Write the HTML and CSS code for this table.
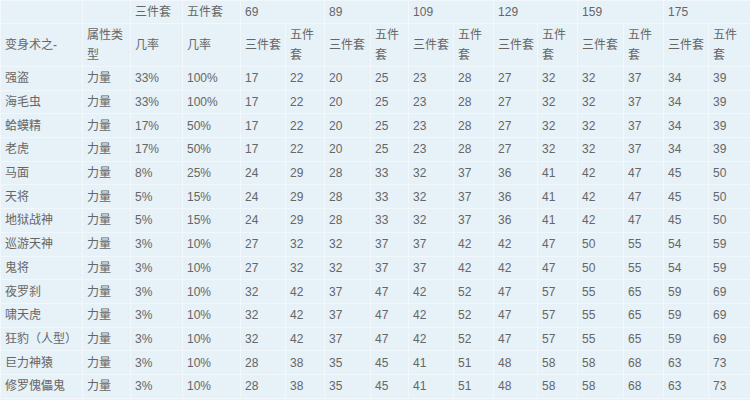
FILE: index.html
```html
<!DOCTYPE html>
<html lang="zh-CN">
<head>
<meta charset="utf-8">
<title>变身术</title>
<link rel="stylesheet" href="styles.css">
</head>
<body>
<table class="grid">
  <colgroup>
    <col class="c82"><col class="c48"><col class="c52"><col class="c58">
    <col class="c45"><col class="c39"><col class="c46"><col class="c38">
    <col class="c45"><col class="c40"><col class="c44"><col class="c40">
    <col class="c46"><col class="c40"><col class="c45"><col class="c42">
  </colgroup>
  <tr class="h1">
    <td></td><td></td><td>三件套</td><td>五件套</td>
    <td colspan="2">69</td><td colspan="2">89</td><td colspan="2">109</td>
    <td colspan="2">129</td><td colspan="2">159</td><td colspan="2">175</td>
  </tr>
  <tr class="h2">
    <td>变身术之-</td><td>属性类型</td><td>几率</td><td>几率</td>
    <td>三件套</td><td>五件套</td><td>三件套</td><td>五件套</td>
    <td>三件套</td><td>五件套</td><td>三件套</td><td>五件套</td>
    <td>三件套</td><td>五件套</td><td>三件套</td><td>五件套</td>
  </tr>
  <tr><td>强盗</td><td>力量</td><td>33%</td><td>100%</td><td>17</td><td>22</td><td>20</td><td>25</td><td>23</td><td>28</td><td>27</td><td>32</td><td>32</td><td>37</td><td>34</td><td>39</td></tr>
  <tr><td>海毛虫</td><td>力量</td><td>33%</td><td>100%</td><td>17</td><td>22</td><td>20</td><td>25</td><td>23</td><td>28</td><td>27</td><td>32</td><td>32</td><td>37</td><td>34</td><td>39</td></tr>
  <tr><td>蛤蟆精</td><td>力量</td><td>17%</td><td>50%</td><td>17</td><td>22</td><td>20</td><td>25</td><td>23</td><td>28</td><td>27</td><td>32</td><td>32</td><td>37</td><td>34</td><td>39</td></tr>
  <tr><td>老虎</td><td>力量</td><td>17%</td><td>50%</td><td>17</td><td>22</td><td>20</td><td>25</td><td>23</td><td>28</td><td>27</td><td>32</td><td>32</td><td>37</td><td>34</td><td>39</td></tr>
  <tr><td>马面</td><td>力量</td><td>8%</td><td>25%</td><td>24</td><td>29</td><td>28</td><td>33</td><td>32</td><td>37</td><td>36</td><td>41</td><td>42</td><td>47</td><td>45</td><td>50</td></tr>
  <tr><td>天将</td><td>力量</td><td>5%</td><td>15%</td><td>24</td><td>29</td><td>28</td><td>33</td><td>32</td><td>37</td><td>36</td><td>41</td><td>42</td><td>47</td><td>45</td><td>50</td></tr>
  <tr><td>地狱战神</td><td>力量</td><td>5%</td><td>15%</td><td>24</td><td>29</td><td>28</td><td>33</td><td>32</td><td>37</td><td>36</td><td>41</td><td>42</td><td>47</td><td>45</td><td>50</td></tr>
  <tr><td>巡游天神</td><td>力量</td><td>3%</td><td>10%</td><td>27</td><td>32</td><td>32</td><td>37</td><td>37</td><td>42</td><td>42</td><td>47</td><td>50</td><td>55</td><td>54</td><td>59</td></tr>
  <tr><td>鬼将</td><td>力量</td><td>3%</td><td>10%</td><td>27</td><td>32</td><td>32</td><td>37</td><td>37</td><td>42</td><td>42</td><td>47</td><td>50</td><td>55</td><td>54</td><td>59</td></tr>
  <tr><td>夜罗刹</td><td>力量</td><td>3%</td><td>10%</td><td>32</td><td>42</td><td>37</td><td>47</td><td>42</td><td>52</td><td>47</td><td>57</td><td>55</td><td>65</td><td>59</td><td>69</td></tr>
  <tr><td>啸天虎</td><td>力量</td><td>3%</td><td>10%</td><td>32</td><td>42</td><td>37</td><td>47</td><td>42</td><td>52</td><td>47</td><td>57</td><td>55</td><td>65</td><td>59</td><td>69</td></tr>
  <tr><td>狂豹（人型）</td><td>力量</td><td>3%</td><td>10%</td><td>32</td><td>42</td><td>37</td><td>47</td><td>42</td><td>52</td><td>47</td><td>57</td><td>55</td><td>65</td><td>59</td><td>69</td></tr>
  <tr><td>巨力神猿</td><td>力量</td><td>3%</td><td>10%</td><td>28</td><td>38</td><td>35</td><td>45</td><td>41</td><td>51</td><td>48</td><td>58</td><td>58</td><td>68</td><td>63</td><td>73</td></tr>
  <tr><td>修罗傀儡鬼</td><td>力量</td><td>3%</td><td>10%</td><td>28</td><td>38</td><td>35</td><td>45</td><td>41</td><td>51</td><td>48</td><td>58</td><td>58</td><td>68</td><td>63</td><td>73</td></tr>
</table>
</body>
</html>
```
FILE: styles.css
```css
html, body {
  margin: 0;
  padding: 0;
  background: #e6f1f8;
  overflow: hidden;
}

.grid {
  border-collapse: collapse;
  table-layout: fixed;
  width: 750px;
  font-family: "Liberation Sans", "Noto Sans CJK SC", sans-serif;
  font-size: 12px;
  line-height: 20px;
  color: #666666;
  background: #e6f1f8;
}

.grid td {
  border: 1px solid #f1f7fb;
  padding: 0 3px 0 4px;
  vertical-align: middle;
  text-align: left;
  white-space: normal;
  word-break: break-all;
}

.grid tr { height: 23.7px; }
.grid tr.h1 { height: 23px; }
.grid tr.h2 { height: 43px; }

.c82 { width: 82px; }
.c48 { width: 48px; }
.c52 { width: 52px; }
.c58 { width: 58px; }
.c45 { width: 45px; }
.c39 { width: 39px; }
.c46 { width: 46px; }
.c38 { width: 38px; }
.c40 { width: 40px; }
.c44 { width: 44px; }
.c42 { width: 42px; }
```
